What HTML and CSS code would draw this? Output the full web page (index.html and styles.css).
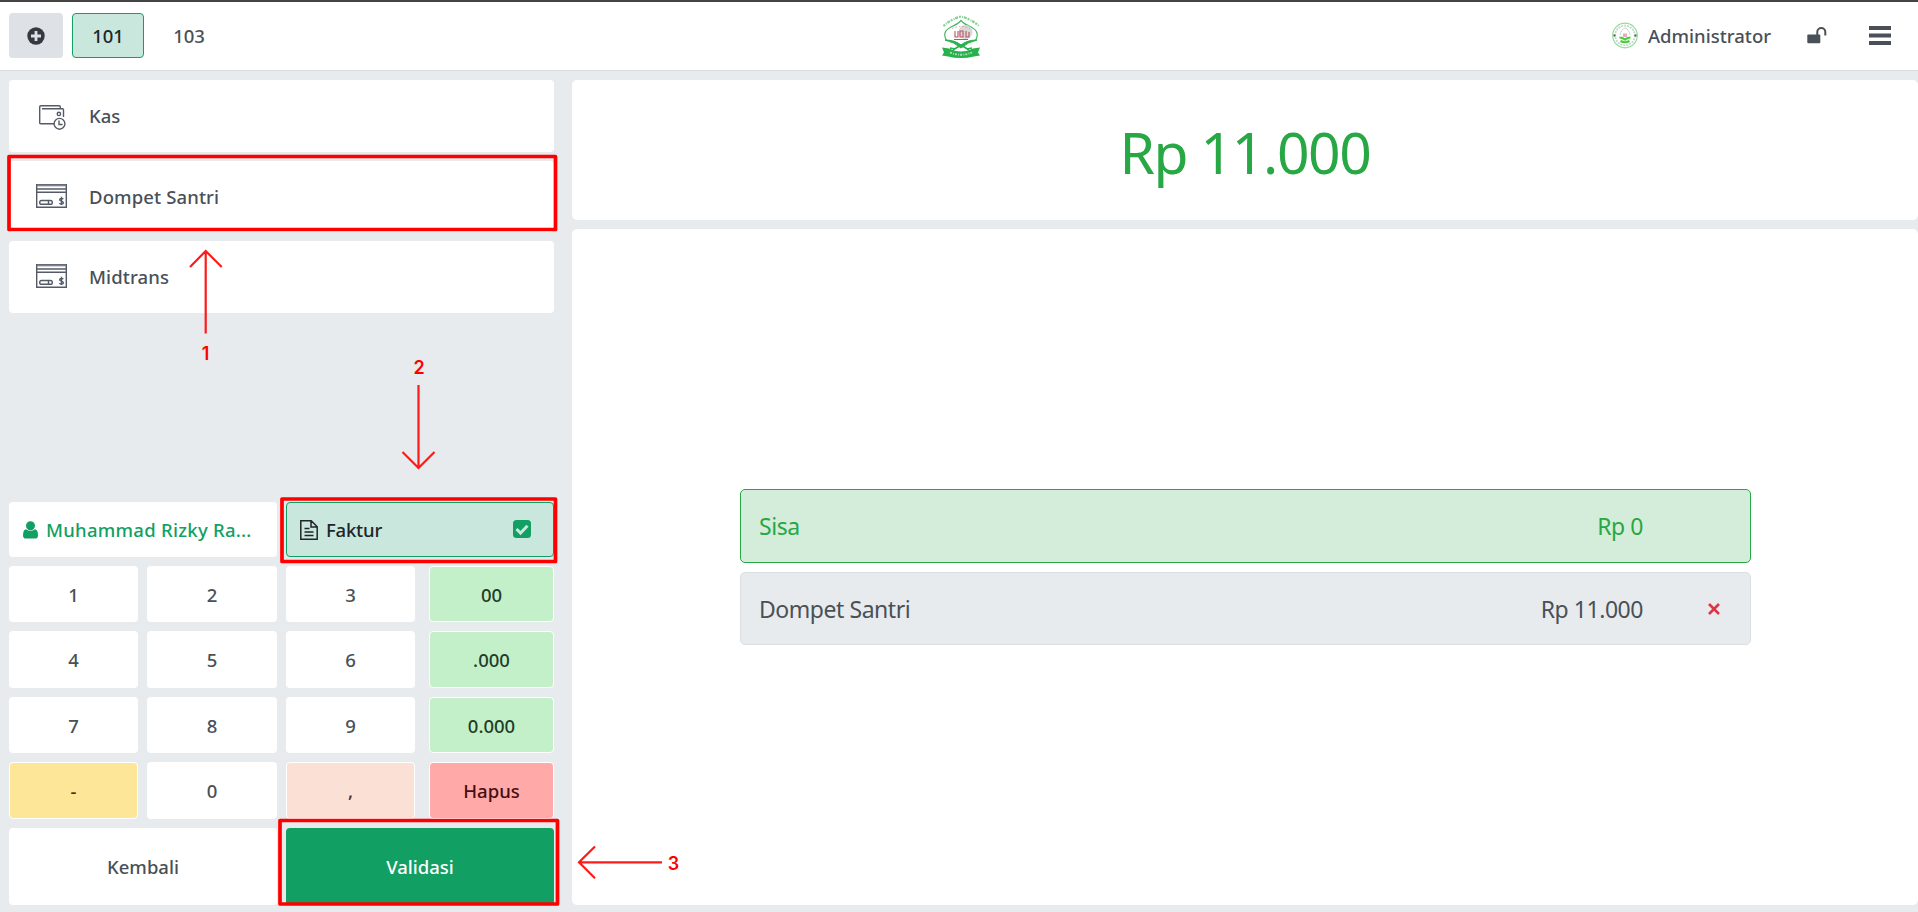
FILE: index.html
```html
<!DOCTYPE html>
<html lang="id">
<head>
<meta charset="utf-8">
<title>Pembayaran</title>
<link rel="stylesheet" href="styles.css">
</head>
<body>
<svg class="defs" width="0" height="0">
  <symbol id="card" viewBox="0 0 31 24">
    <g fill="none" stroke="#555b66" stroke-width="1.400">
      <path d="M.7.7h29.600v22.600H.7z"/><path d="M1 1.400h29" stroke="#7b808a" stroke-width="1.800"/><path d="M1 5h29M1 8.300h29"/>
      <rect x="3.700" y="16.500" width="12.600" height="3.800" rx="1.900"/><path d="M12.500 16.500v3.800"/>
      <path d="M27.300 15.200c-.6-1-3.600-1-3.600.6 0 1.700 3.700 1 3.700 2.900 0 1.600-3.200 1.600-3.900.4M25.500 12.800v8.300"/>
    </g>
  </symbol>
</svg>
<div class="pos">
  <header class="topbar">
    <div class="orders">
      <button class="new-order"><svg width="18" height="18" viewBox="0 0 18 18"><circle cx="9" cy="9" r="8.700" fill="#343a40"/><path d="M9 4v10M4 9h10" stroke="#dee2e6" stroke-width="2.800"/></svg></button>
      <button class="order active"><span class="t">101</span></button>
      <button class="order"><span class="t">103</span></button>
    </div>
    <svg class="logo" width="40" height="44" viewBox="0 0 40 44">
      <path d="M2.500 12Q10 5 20 2.500Q30 5 38 12" fill="none" stroke="#83cf94" stroke-width="2.200" stroke-dasharray="2 1.200 1 .8 3 1"/>
      <path d="M6 27Q0 18 10 13Q17 10 20 6.500Q23 10 30 13Q40 18 34 27" fill="none" stroke="#42b863" stroke-width="1.200"/>
      <circle cx="24.500" cy="18" r="7" fill="#d8d8d8"/><path d="M11 14.500q9-4 18 0" fill="none" stroke="#df9aa2" stroke-dasharray="1.500 2"/>
      <g fill="none" stroke="#b85463" stroke-width="1.100"><path d="M14 17v6h3v-6M19 17h3v6h-3zM25 17v6h3v-5M13 25.500h14"/></g>
      <path d="M4 26Q14 26 20 31Q26 26 36 26Q27 28 20 34Q13 28 4 26z" fill="#28b14c" stroke="#28b14c"/>
      <path d="M12 36l8-5 8 5M9 34l5 1M31 34l-5 1" fill="none" stroke="#28b14c" stroke-width="1.600"/>
      <path d="M1 33.500l7 1q12 6 24 0l7-1-2 5 2 3-6 1q-13 3-26 0l-6-1 2-3z" fill="#28b14c"/>
      <path d="M9 38.500q11 4.500 22 0" fill="none" stroke="#a9e2b7" stroke-width="1.800" stroke-dasharray="2 1.200 1 1"/>
    </svg>
    <div class="account">
      <svg width="26" height="27" viewBox="0 0 26 27"><g fill="none"><circle cx="13" cy="13.500" r="12.300" stroke="#8fdf98" stroke-width="1.200"/><circle cx="13" cy="13.500" r="9.800" stroke="#c9d4cc" stroke-width="1.800" stroke-dasharray="2 1"/><path d="M8 13q1-6 5-7 4 1 5 7" stroke="#c3dcc7"/><path d="M11 11.500h4v3.500h-4z" fill="#eba9c5"/><path d="M7.500 15.500q3 0 5.500 2 2.500-2 5.500-2M8.500 19q4.500 2.500 9 0" stroke="#47cf35" stroke-width="2.200"/></g><path d="M1.500 12.500h2v2h-2zM22.500 12.500h2v2h-2z" fill="#555"/></svg>
      <span class="t">Administrator</span>
    </div>
    <svg class="lock" width="20" height="17" viewBox="0 0 20 17"><rect x=".3" y="7.500" width="13" height="8.800" rx="1" fill="#495057"/><path d="M10.300 8V5a4 4 0 0 1 8 0v3.500" fill="none" stroke="#495057" stroke-width="2"/></svg>
    <svg class="menu" width="22" height="19" viewBox="0 0 22 19"><path d="M0 2h22M0 9.500h22M0 17h22" stroke="#495057" stroke-width="3.800"/></svg>
  </header>
  <main class="content">
    <section class="left">
      <div class="methods">
        <div class="method"><svg class="wallet" width="27" height="25" viewBox="0 0 27 25"><g fill="none" stroke="#555b66" stroke-width="1.400"><path d="M15 18.800H1.800Q.7 18.800.7 17.700V2Q.7.700 2 .7h18q1.300 0 1.300 1.300v1.700M3 3.800h20.500q1 0 1 1V12"/><circle cx="19.900" cy="8.900" r="1.700"/><circle cx="20.500" cy="18.800" r="5.400"/><path d="M20 15.500v4h3.600"/></g></svg><span class="t">Kas</span></div>
        <div class="method"><svg class="cardicon"><use href="#card"/></svg><span class="t method-name">Dompet Santri</span></div>
        <div class="method"><svg class="cardicon"><use href="#card"/></svg><span class="t method-name">Midtrans</span></div>
      </div>
      <div class="options">
        <button class="customer"><svg width="15" height="18" viewBox="0 0 15 18"><path d="M3 8.200Q0 8.700 0 14.500 0 17.600 3 17.600h9q3 0 3-3.100 0-5.800-3-6.300-4.500 3.300-9 0z"/><circle cx="7.500" cy="4.700" r="4.500"/></svg><span class="t customer-name">Muhammad Rizky Ra...</span></button>
        <button class="invoice"><svg width="18" height="20" viewBox="0 0 18 20"><path d="M.8.8h10.400l6 6v12.400H.8zM11 1v6h6M4.500 8.500h5M4.500 12h9M4.500 15.500h9" fill="none" stroke="#212529" stroke-width="1.500"/></svg><span class="t invoice-name">Faktur</span><svg class="check" width="18" height="18" viewBox="0 0 18 18"><rect width="18" height="18" rx="3.500" fill="#119f63"/><path d="M3.500 9l4 4 7-7.200" fill="none" stroke="#cae7dd" stroke-width="3"/></svg></button>
      </div>
      <div class="keys">
        <button>1</button><button>2</button><button>3</button><button class="green">00</button>
        <button>4</button><button>5</button><button>6</button><button class="green">.000</button>
        <button>7</button><button>8</button><button>9</button><button class="green">0.000</button>
        <button class="yellow">-</button><button>0</button><button class="peach">,</button><button class="red">Hapus</button>
      </div>
      <div class="actions"><button>Kembali</button><button class="validate">Validasi</button></div>
    </section>
    <section class="right">
      <div class="total"><span class="t">Rp 11.000</span></div>
      <div class="summary">
        <div class="line due"><span class="t">Sisa</span><span class="amount t">Rp 0</span><span class="remove"></span></div>
        <div class="line"><span class="t">Dompet Santri</span><span class="amount t">Rp 11.000</span><span class="remove"><svg width="12" height="12" viewBox="0 0 12 12"><path d="M1 1l10 10M11 1L1 11" stroke="#dc3545" stroke-width="2.600"/></svg></span></div>
      </div>
    </section>
  </main>
  <svg class="marks" width="1918" height="912" viewBox="0 0 1918 912">
    <g fill="none" stroke="#f00" stroke-width="3.700" stroke-linejoin="round">
      <rect x="9" y="156.500" width="546.500" height="73"/><rect x="282" y="499" width="273.500" height="62.500"/><rect x="280" y="820.500" width="277.500" height="83.500"/>
    </g>
    <g fill="none" stroke="#ff1a1a" stroke-width="2.200">
      <path d="M205.700 333.500V251M190 267l15.700-16 16 16M418.500 385v83M402.500 452l16 16 16-16M662 862.300h-83M595 846.500l-16 15.800 16 16"/>
    </g>
    <g class="num"><text x="205.500" y="359.500">1</text><text x="419" y="374">2</text><text x="673.500" y="869.500">3</text></g>
  </svg>
</div>
</body>
</html>
```
FILE: styles.css
```css
* { box-sizing: border-box; }
body { margin: 0; background: #e7ebee; color: #495057; font: 500 18.500px/1.5 "Noto Sans", "Open Sans", sans-serif; overflow: hidden; }
button { border: 0; padding: 0; margin: 0; background: #fff; color: inherit; font: inherit; border-radius: 4px; display: flex; align-items: center; justify-content: center; min-width: 0; }
svg { flex: none; display: block; }
.defs { position: absolute; }
.t { white-space: nowrap; }
.pos { position: relative; width: 1918px; height: 912px; display: flex; flex-direction: column; }
.topbar { height: 71px; flex: none; background: #fff; border-top: 2px solid #444243; border-bottom: 1px solid #d8dde1; display: flex; align-items: center; padding: 0 27px 1px 9px; }
.orders { display: flex; gap: 9px; width: 932px; }
.orders button { height: 45px; }
.new-order { width: 54px; background: #dee2e6; }
.order { width: 72px; }
.orders .active { background: #cae7dd; border: 1px solid #119f63; color: #212529; }
.account { display: flex; align-items: center; gap: 10px; margin-left: auto; width: 195px; }
.menu { margin-left: 42px; }
.content { flex: 1; min-height: 0; display: flex; padding: 9px 0 7px 9px; gap: 18px; }
.left { width: 545px; display: flex; flex-direction: column; gap: 9px; }
.methods { flex: 1; display: flex; flex-direction: column; gap: 9px; }
.method { height: 71.600px; background: #fff; border-radius: 4px; display: flex; align-items: center; padding-left: 27px; }
.method-name { letter-spacing: .12px; }
.cardicon { width: 31px; height: 24px; margin: -1px 22px 0 0; }
.wallet { margin: 4px 23px 0 3px; }
.options, .actions { display: grid; grid-template-columns: 268px 268px; gap: 9px; }
.options { height: 55px; }
.options button { justify-content: flex-start; padding-left: 14px; }
.options .customer { fill: #119f63; color: #119f63; gap: 8px; }
.customer-name { letter-spacing: .26px; }
.options .invoice { gap: 8px; padding-left: 13px; background: #cae7dd; border: 1px solid #119f63; color: #212529; }
.invoice-name { letter-spacing: -.2px; }
.check { margin: -1px 22px 0 auto; }
.keys { display: grid; grid-template-columns: 129px 130px 129px 130px; column-gap: 9px; grid-template-rows: 56px 57px 56px 57px; row-gap: 9px; }
.keys button { padding-top: 1px; }
.keys button:nth-child(4n) { margin-left: 5px; width: 125px; }
.keys .green { background: #c4f0c9; color: #1f3d2a; border: 1px solid #fff; }
.keys .yellow { background: #fde697; color: #403614; border: 1px solid #fff; }
.keys .peach { background: #fae0d5; color: #463027; border: 1px solid #fff; }
.keys .red { background: #ffa9a9; color: #470e12; border: 1px solid #fff; }
.actions { height: 77px; grid-template-rows: 77px; }
.actions .validate { background: #119f63; color: #fff; }
.right { flex: 1; display: flex; flex-direction: column; gap: 9px; }
.total, .summary { background: #fff; border-radius: 5px; }
.total { height: 140px; display: flex; align-items: center; justify-content: center; color: #28a745; font-size: 57px; font-weight: 400; letter-spacing: -1.400px; padding-top: 6px; }
.summary { flex: 1; display: flex; flex-direction: column; gap: 9px; padding: 260px 167px 0 168px; }
.line { height: 73px; background: #e7ebee; border: 1px solid #dadfe3; border-radius: 5px; display: flex; align-items: center; padding: 1px 0 0 18px; font-size: 23px; font-weight: 400; letter-spacing: -.45px; }
.line.due { height: 74px; background: #d4edda; border-color: #28a745; color: #28a745; }
.amount { margin-left: auto; }
.remove { width: 107px; display: flex; padding-left: 65px; }
.marks { position: absolute; left: 0; top: 0; pointer-events: none; }
.num { fill: #f00; font: 600 18px Inter, sans-serif; text-anchor: middle; }
```
